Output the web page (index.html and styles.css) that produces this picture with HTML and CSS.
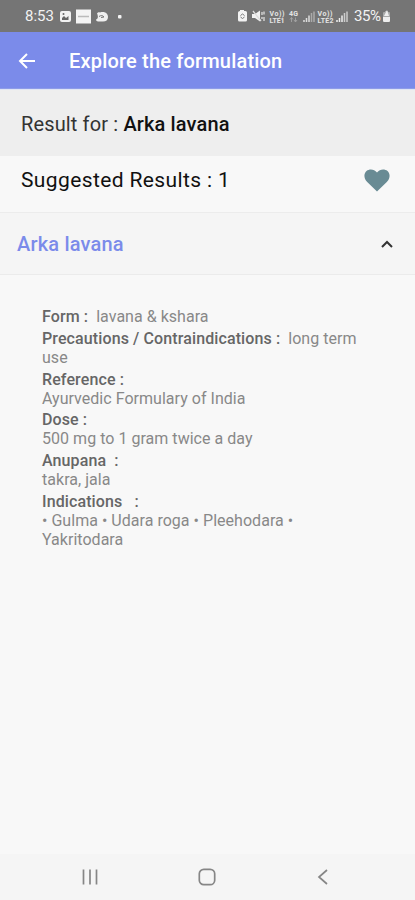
FILE: index.html
```html
<!DOCTYPE html>
<html lang="en">
<head>
    <meta charset="UTF-8">
    <meta name="viewport" content="width=device-width, initial-scale=1.0">
    <title>Explore the formulation</title>
    <link rel="stylesheet" href="styles.css">
</head>
<body>
    <div class="status-bar">
        <span class="clock">8:53</span>
        <svg class="notifications" width="64" height="16" viewBox="0 0 64 16">
            <rect x="0" y="3" width="11" height="11" rx="2" fill="#f2f2f2"/>
            <path d="M2 12V10l2-2 2 2 2.500-2v4z" fill="#666"/>
            <circle cx="3.500" cy="6" r="1" fill="#666"/>
            <rect x="16" y="1.500" width="15" height="14" fill="#f4f4f4"/>
            <path d="M18 8.500h11" stroke="#bbb" stroke-width="1.500"/>
            <path d="M36 11.500c2-.5 2.500-3 1-6 1-1.500 2-1.500 3-1 5-1.500 8 1 8 4.500 0 3-2 4.500-5 4.500H38c-1 0-2-1-2-2z" fill="#f0f0f0"/>
            <path d="M39 8.500c2-1.500 4-1 5 .5l-3 .5" stroke="#777" fill="none"/>
            <rect x="58" y="7" width="3.500" height="3.500" rx="1" fill="#f4f4f4"/>
        </svg>
        <svg class="indicators" width="112" height="16" viewBox="0 0 112 16">
            <path d="M3 2h4v1h1.500q1.500 0 1.500 1.500V12q0 1.500-1.500 1.500h-6Q1 13.500 1 12V4.500Q1 3 3 3z" fill="#f2f2f2"/>
            <path d="M3.500 7.500l2-1.500 2 1.500M3.500 9l2 1.500 2-1.500" stroke="#777" fill="none"/>
            <path d="M15 6h3l5-3.500v11L18 10h-3z" fill="#f2f2f2"/>
            <path d="M16 3l8 10M25 4v3M27 3.500v3M25 9v2M27 9v4" stroke="#ddd" stroke-width="1.300"/>
            <text class="volte" x="32.500" y="7.500" textLength="15">Vo))</text>
            <text class="volte" x="32.500" y="14.500" textLength="15">LTE1</text>
            <text class="volte" x="52" y="8" textLength="9">4G</text>
            <path d="M54.500 14v-4M53 11.500l1.500-2 1.500 2M58.500 9.500v4M57 12l1.500 2 1.500-2" stroke="#aaa" stroke-width=".8" fill="none"/>
            <path d="M67 14v-2M69.500 14v-4M72 14V7.500" stroke="#ddd" stroke-width="1.500"/>
            <path d="M74.500 14V5M77 14V3.500" stroke="#aaa" stroke-width="1.500"/>
            <text class="volte" x="80.500" y="7.500" textLength="15">Vo))</text>
            <text class="volte" x="80.500" y="14.500" textLength="16">LTE2</text>
            <path d="M100 14v-2M102.500 14v-4M105 14V7.500" stroke="#eee" stroke-width="1.500"/>
            <path d="M107.500 14V5M110 14V3.500" stroke="#ccc" stroke-width="1.500"/>
        </svg>
        <span class="battery-level">35%</span>
        <svg class="battery" width="9" height="16" viewBox="0 0 9 16">
            <path d="M3 3h3v1h1q1 0 1 1v7.500q0 1.500-1.500 1.500h-4Q1 14 1 12.500V5q0-1 1-1h1z" fill="#aaa"/>
            <path d="M1 9h7v3.500q0 1.500-1.500 1.500h-4Q1 14 1 12.500zM5 2L2 8h5z" fill="#eee"/>
        </svg>
    </div>

    <header class="app-bar">
        <svg class="back-arrow" width="18" height="18" viewBox="0 0 18 18">
            <path d="M17 9H2M9 2L2 9l7 7" fill="none" stroke="#fff" stroke-width="2"/>
        </svg>
        <h1>Explore the formulation</h1>
    </header>

    <div class="result-for"><span>Result for : <b>Arka lavana</b></span></div>

    <div class="suggested">
        <span>Suggested Results : 1</span>
        <svg class="heart" width="26" height="23" viewBox="0 0 26 23">
            <path d="M13 22.500L3.200 13C-.5 9.300-.3 4.500 2.500 2 5.500-.4 10.200 0 13 3.500 15.800 0 20.500-.4 23.500 2c2.800 2.500 3 7.300-.7 11z" fill="#698b94"/>
        </svg>
    </div>

    <div class="accordion-header">
        <span>Arka lavana</span>
        <svg class="chevron" width="12" height="8" viewBox="0 0 12 8">
            <path d="M1 7l5-5 5 5" fill="none" stroke="#333" stroke-width="2"/>
        </svg>
    </div>

    <main class="details">
        <p><b>Form :</b>&nbsp; lavana &amp; kshara</p>
        <p><b>Precautions / Contraindications :</b>&nbsp; long term<br>use</p>
        <p><b>Reference :</b><br>Ayurvedic Formulary of India</p>
        <p><b>Dose :</b><br>500 mg to 1 gram twice a day</p>
        <p><b>Anupana &nbsp;:</b><br>takra, jala</p>
        <p><b>Indications &nbsp; :</b><br>• Gulma • Udara roga • Pleehodara •<br>Yakritodara</p>
    </main>

    <nav class="nav-bar">
        <svg width="18" height="18" viewBox="0 0 18 18">
            <path d="M2.500 1.500v15M9 1.500v15M15.500 1.500v15" stroke="#868686" stroke-width="1.700"/>
        </svg>
        <svg width="18" height="18" viewBox="0 0 18 18">
            <rect x="1.300" y="1.300" width="15.400" height="15.400" rx="4.500" fill="none" stroke="#868686" stroke-width="1.700"/>
        </svg>
        <svg width="18" height="18" viewBox="0 0 18 18">
            <path d="M13 2L5 9l8 7" fill="none" stroke="#868686" stroke-width="1.700"/>
        </svg>
    </nav>
</body>
</html>
```
FILE: styles.css
```css
* {
    box-sizing: border-box;
}

body {
    margin: 0;
    height: 900px;
    display: flex;
    flex-direction: column;
    background: #f8f8f8;
    font-family: Roboto, sans-serif;
    color: #111;
    overflow: hidden;
}

.status-bar {
    height: 32px;
    display: flex;
    align-items: center;
    padding: 0 24px 0 25px;
    background: #757575;
    color: #f2f2f2;
    font-size: 15px;
}

.clock {
    width: 29px;
    margin-right: 6px;
}

.indicators {
    margin-left: auto;
    margin-right: 5px;
}

.volte {
    font-size: 7px;
    font-weight: 700;
    fill: #e4e4e4;
}

.battery-level {
    width: 28px;
    font-size: 15px;
    letter-spacing: -0.4px;
}

.app-bar {
    height: 57px;
    display: flex;
    align-items: center;
    padding: 1px 18px 0;
    background: #7b8bea;
    border-bottom: 1px solid #8e9ce8;
    color: #fff;
}

.app-bar h1 {
    margin: 0 0 0 33px;
    font-size: 20px;
    font-weight: 500;
    letter-spacing: 0.18px;
}

.result-for {
    height: 67px;
    display: flex;
    align-items: center;
    padding: 1px 21px 0;
    background: #eee;
    border-top: 1px solid #dfe5f5;
    font-size: 20px;
    letter-spacing: 0.14px;
}

.result-for span {
    color: #333;
}

.result-for b {
    font-weight: 500;
    color: #111;
}

.suggested {
    height: 57px;
    display: flex;
    align-items: center;
    justify-content: space-between;
    padding: 0 25px 8px 21px;
    border-bottom: 1px solid #ececec;
    font-size: 21px;
    letter-spacing: 0.38px;
}

.accordion-header {
    height: 62px;
    display: flex;
    align-items: center;
    justify-content: space-between;
    padding: 0 22px 0 17px;
    background: #f5f5f5;
    border-bottom: 1px solid #ebebeb;
    color: #7b8bea;
    font-size: 20px;
    font-weight: 500;
    letter-spacing: 0.18px;
}

.details {
    flex: 1;
    padding: 32px 42px 0;
    color: #888;
    font-size: 16px;
    line-height: 19px;
    letter-spacing: 0.03px;
}

.details p {
    margin: 0 0 2.8px;
}

.details b {
    font-weight: 500;
    color: #666;
    letter-spacing: 0.11px;
}

.nav-bar {
    height: 46px;
    display: flex;
    align-items: center;
    justify-content: space-between;
    padding: 0 83px 0 81px;
    background: #f5f5f5;
}
```
